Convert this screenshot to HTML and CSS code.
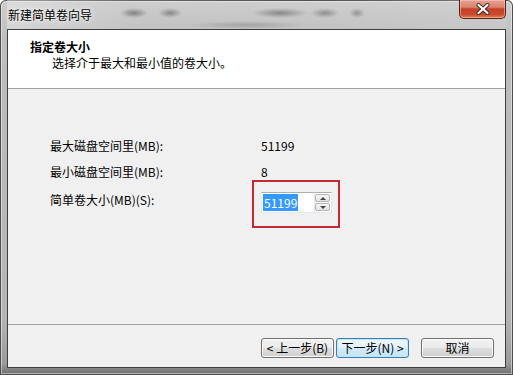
FILE: index.html
```html
<!DOCTYPE html>
<html lang="zh-CN">
<head>
<meta charset="utf-8">
<title>新建简单卷向导</title>
<link rel="stylesheet" href="styles.css">
</head>
<body>
<div class="window">
  <div class="titlebar">
    <span class="title">新建简单卷向导</span>
    <button class="close" aria-label="关闭">
      <svg width="14" height="12" viewBox="0 0 14 12">
        <path d="M2.5 2 L11.5 10 M11.5 2 L2.5 10" stroke="#3a2a26" stroke-width="4" stroke-linecap="round"/>
        <path d="M2.5 2 L11.5 10 M11.5 2 L2.5 10" stroke="#ffffff" stroke-width="2.2" stroke-linecap="round"/>
      </svg>
    </button>
  </div>
  <div class="client">
    <div class="header">
      <div class="h-title">指定卷大小</div>
      <div class="h-sub">选择介于最大和最小值的卷大小。</div>
    </div>
    <div class="content">
      <div class="fields">
        <div class="label">最大磁盘空间里(MB):</div>
        <div class="value">51199</div>
        <div class="label">最小磁盘空间里(MB):</div>
        <div class="value">8</div>
        <div class="label l-spin">简单卷大小(MB)(S):</div>
        <div class="spin-wrap">
          <div class="spin">
            <div class="spin-input"><span class="sel">51199</span></div>
            <div class="spin-btns">
              <span class="sbtn"><i class="tri-up"></i></span>
              <span class="sbtn"><i class="tri-down"></i></span>
            </div>
          </div>
          <div class="mark"></div>
        </div>
      </div>
    </div>
    <div class="footer">
      <button class="btn">&lt; 上一步(B)</button>
      <button class="btn btn-default">下一步(N) &gt;</button>
      <button class="btn btn-cancel">取消</button>
    </div>
  </div>
</div>
</body>
</html>
```

FILE: styles.css
```css
* { box-sizing: border-box; }

html, body {
  margin: 0;
  padding: 0;
  background: #ffffff;
}

body {
  font-family: "Noto Sans CJK SC", "Liberation Sans", sans-serif;
  font-size: 12px;
  color: #000;
}

.window {
  width: 513px;
  height: 375px;
  display: flex;
  flex-direction: column;
  padding: 0 7px 7px 7px;
  border-radius: 6px 6px 0 0;
  background:
    linear-gradient(to bottom, #cfcfcf 0%, #bdbdbd 10%, #b4b4b4 85%, #9a9a9a 97%, #6a6a6a 100%);
  box-shadow: inset 0 0 0 1px #4e4e4e, inset 0 0 0 2px rgba(255,255,255,0.45);
}

.titlebar {
  height: 29px;
  flex: none;
  display: flex;
  justify-content: space-between;
  align-items: flex-start;
  background:
    radial-gradient(ellipse 14px 5px at 127px 13px, rgba(70,70,70,0.55), transparent),
    radial-gradient(ellipse 12px 5px at 163px 13px, rgba(70,70,70,0.5), transparent),
    radial-gradient(ellipse 28px 5px at 273px 13px, rgba(70,70,70,0.5), transparent),
    radial-gradient(ellipse 14px 5px at 318px 13px, rgba(70,70,70,0.45), transparent),
    radial-gradient(ellipse 8px 5px at 350px 13px, rgba(70,70,70,0.4), transparent),
    radial-gradient(ellipse 60px 4px at 240px 25px, rgba(90,90,90,0.3), transparent),
    linear-gradient(to right, rgba(230,230,230,0.55) 0%, rgba(200,200,200,0.2) 25%, rgba(0,0,0,0) 60%, rgba(210,210,210,0.35) 100%);
}

.title {
  padding: 7px 0 0 1px;
  line-height: 15px;
  font-size: 12px;
  color: #000;
  text-shadow: 0 0 6px rgba(255,255,255,0.9), 0 0 3px rgba(255,255,255,0.8);
}

.close {
  width: 47px;
  height: 19px;
  margin: 0;
  padding: 0;
  border: 1px solid #5a1f14;
  border-top: none;
  border-radius: 0 0 5px 5px;
  background: linear-gradient(to bottom, #e7a192 0%, #d9826d 40%, #c5402a 50%, #c94a2e 80%, #e27f4e 100%);
  box-shadow: inset 0 0 0 1px rgba(255,210,200,0.5);
  display: flex;
  align-items: center;
  justify-content: center;
}

.client {
  flex: 1;
  display: flex;
  flex-direction: column;
  background: #f0f0f0;
  border: 1px solid #3e3e3e;
}

.header {
  height: 59px;
  flex: none;
  background: #ffffff;
  border-bottom: 1px solid #a0a0a0;
  padding: 10px 0 0 22px;
}

.h-title {
  font-weight: bold;
  line-height: 14px;
}

.h-sub {
  line-height: 15px;
  padding-left: 22px;
  margin-top: 1px;
}

.content {
  flex: 1;
  padding: 47px 0 0 42px;
}

.fields {
  display: grid;
  grid-template-columns: 211px auto;
  row-gap: 6px;
  align-items: start;
}

.label, .value {
  line-height: 20px;
  white-space: nowrap;
}

.l-spin {
  margin-top: 4px;
  line-height: 16px;
}

.spin-wrap {
  position: relative;
  justify-self: start;
  margin-top: 4px;
}

.spin {
  display: flex;
  height: 21px;
}

.spin-input {
  width: 54px;
  height: 21px;
  background: #fff;
  border: 1px solid #e3e9ef;
  border-top-color: #abadb3;
  padding: 1px 0 0 1px;
}

.sel {
  display: inline-block;
  height: 17px;
  line-height: 17px;
  padding: 0 1px;
  background: #3399ff;
  color: #fff;
}

.spin-btns {
  width: 17px;
  height: 21px;
  display: flex;
  flex-direction: column;
  gap: 1px;
  padding: 1px 1px 1px 0;
  background: #fff;
  border: 1px solid #e3e9ef;
  border-left: none;
  border-top-color: #abadb3;
}

.sbtn {
  flex: 1;
  display: flex;
  align-items: center;
  justify-content: center;
  border: 1px solid #b4b4b4;
  border-radius: 2px;
  background: linear-gradient(to bottom, #f6f6f6, #e2e2e2);
}

.tri-up, .tri-down {
  width: 0;
  height: 0;
  border-left: 3px solid transparent;
  border-right: 3px solid transparent;
}
.tri-up { border-bottom: 3px solid #444; }
.tri-down { border-top: 3px solid #444; }

.mark {
  position: absolute;
  top: -12px;
  left: -9px;
  right: -8px;
  bottom: -15px;
  border: 2px solid #c42a32;
}

.footer {
  height: 43px;
  flex: none;
  border-top: 1px solid #a0a0a0;
  display: flex;
  justify-content: flex-end;
  align-items: flex-start;
  gap: 2px;
  padding: 13px 11px 0 0;
}

.btn {
  width: 73px;
  height: 20px;
  margin: 0;
  padding: 0;
  font-family: "Noto Sans CJK SC", "Liberation Sans", sans-serif;
  font-size: 12px;
  line-height: 16px;
  color: #000;
  border: 1px solid #707070;
  border-radius: 3px;
  background: linear-gradient(to bottom, #f2f2f2 0%, #ebebeb 48%, #dddddd 52%, #cfcfcf 100%);
  box-shadow: inset 0 0 0 1px #fbfbfb;
}

.btn-default {
  border-color: #3c7fb1;
  background: linear-gradient(to bottom, #eef7fd 0%, #e3f2fb 48%, #d3ebf9 52%, #c4e4f7 100%);
  box-shadow: inset 0 0 0 1px #bfe6fb;
}

.btn-cancel {
  margin-left: 10px;
}
```
